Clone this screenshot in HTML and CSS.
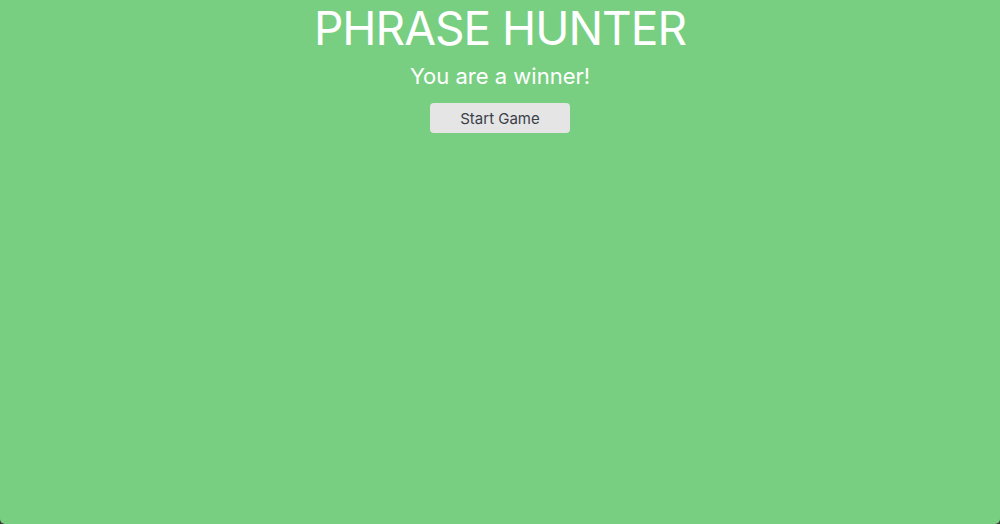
FILE: index.html
```html
<!DOCTYPE html>
<html lang="en">
<head>
<meta charset="utf-8">
<title>Phrase Hunter</title>
<link rel="stylesheet" href="styles.css">
</head>
<body>
<div class="overlay win">
  <h2 class="title">PHRASE HUNTER</h2>
  <h1 class="game-over-message">You are a winner!</h1>
  <button class="btn-reset" type="button">Start Game</button>
</div>
</body>
</html>
```

FILE: styles.css
```css
html, body {
  margin: 0;
  padding: 0;
  height: 100%;
  background: #3a3a3a;
}
body {
  font-family: Inter, "Open Sans", sans-serif;
}
.overlay {
  height: 524px;
  box-sizing: border-box;
  display: flex;
  flex-direction: column;
  align-items: center;
  background: #78cf82;
  border-radius: 0 0 5px 5px;
  color: #fff;
}
.title {
  margin: 0;
  font-size: 46px;
  font-weight: 400;
  line-height: normal;
  letter-spacing: -1px;
}
.game-over-message {
  margin: 6px 0 0;
  font-size: 22px;
  font-weight: 400;
  line-height: 28px;
}
.btn-reset {
  margin-top: 13px;
  width: 140px;
  height: 30px;
  border: 0;
  border-radius: 4px;
  background: #e5e5e5;
  color: #3b4049;
  font-family: inherit;
  font-size: 15px;
  padding: 0;
}
```
